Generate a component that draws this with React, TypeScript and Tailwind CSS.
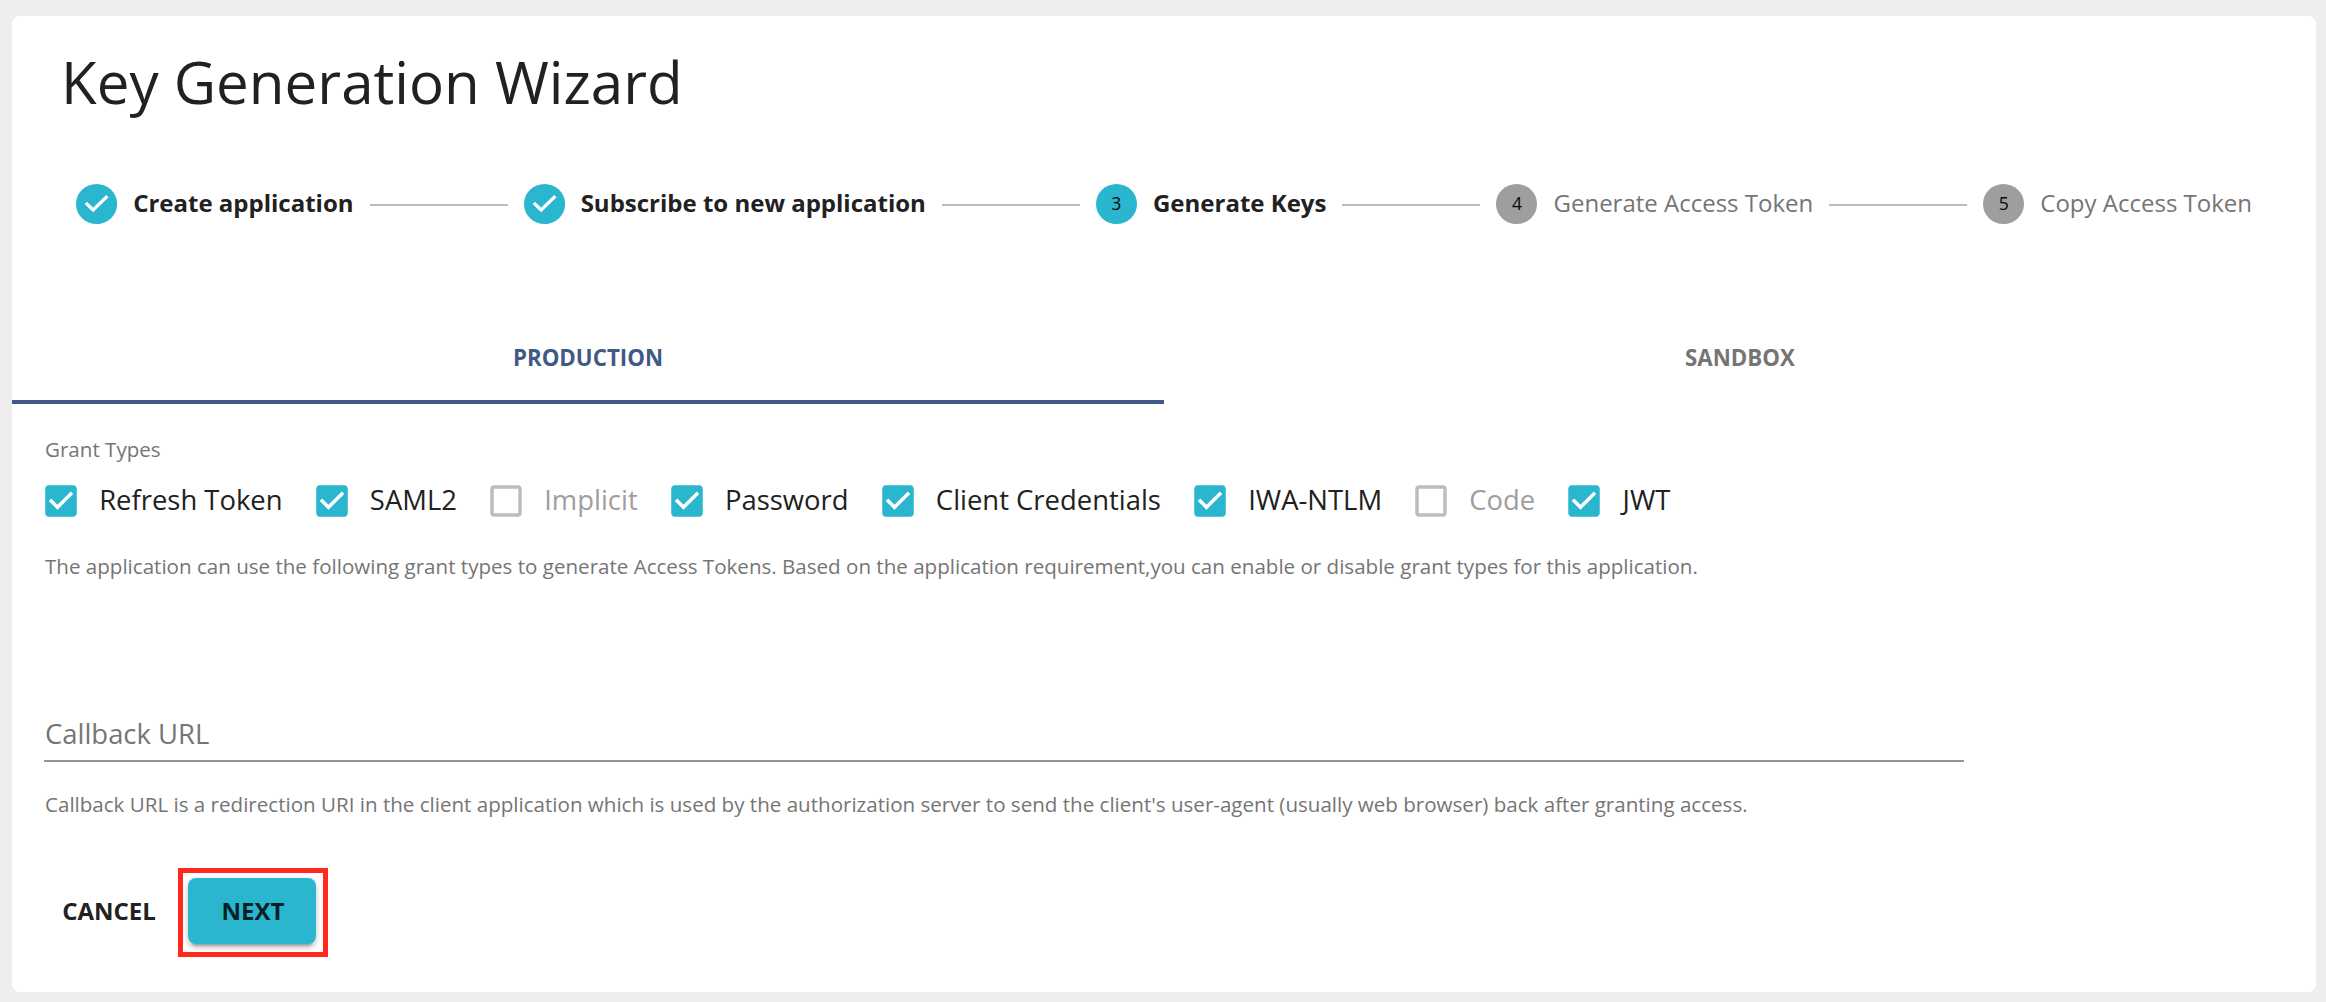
type StepState = "done" | "active" | "pending";

const steps: { label: string; state: StepState }[] = [
  { label: "Create application", state: "done" },
  { label: "Subscribe to new application", state: "done" },
  { label: "Generate Keys", state: "active" },
  { label: "Generate Access Token", state: "pending" },
  { label: "Copy Access Token", state: "pending" },
];

const grantTypes = [
  { label: "Refresh Token", checked: true },
  { label: "SAML2", checked: true },
  { label: "Implicit", checked: false },
  { label: "Password", checked: true },
  { label: "Client Credentials", checked: true },
  { label: "IWA-NTLM", checked: true },
  { label: "Code", checked: false },
  { label: "JWT", checked: true },
];

function StepIcon({ state, index }: { state: StepState; index: number }) {
  if (state === "done") {
    return (
      <svg viewBox="0 0 24 24" preserveAspectRatio="none" className="h-10 w-[41.14px] shrink-0 fill-[#29b6ce]">
        <path d="M12 0a12 12 0 1 0 0 24 12 12 0 0 0 0-24zm-2 17l-5-5 1.4-1.4 3.6 3.6 7.6-7.6L19 8l-9 9z" />
      </svg>
    );
  }
  return (
    <span
      className={`flex h-10 w-[41.14px] shrink-0 items-center justify-center rounded-[50%] text-[17.63px] leading-none text-[#0a0a0a] ${
        state === "active" ? "bg-[#29b6ce]" : "bg-[#9e9e9e]"
      }`}
    >
      {index}
    </span>
  );
}

function Stepper() {
  return (
    <ol className="mt-[62px] flex h-10 items-center gap-4 px-16">
      {steps.map((step, i) => (
        <li key={step.label} className={`flex items-center gap-4 ${i > 0 ? "flex-auto" : ""}`}>
          {i > 0 && <span className="mt-0.5 h-0.5 flex-1 bg-[#bdbdbd]" />}
          <StepIcon state={step.state} index={i + 1} />
          <span
            className={`pb-[3px] text-2xl whitespace-nowrap ${
              step.state === "pending" ? "text-[#757575]" : "font-bold text-[#212121]"
            }`}
          >
            {step.label}
          </span>
        </li>
      ))}
    </ol>
  );
}

function Checkbox({ label, checked }: { label: string; checked: boolean }) {
  return (
    <label className="flex items-center gap-[17.2px]">
      <svg
        viewBox="0 0 24 24"
        className={`size-[42px] shrink-0 ${checked ? "fill-[#29b6ce]" : "fill-[#bdbdbd]"}`}
      >
        {checked ? (
          <path d="M19 3H5c-1.11 0-2 .9-2 2v14c0 1.1.89 2 2 2h14c1.11 0 2-.9 2-2V5c0-1.1-.89-2-2-2zm-9 14l-5-5 1.41-1.41L10 14.17l7.59-7.59L19 8l-9 9z" />
        ) : (
          <path d="M19 5v14H5V5h14m0-2H5c-1.1 0-2 .9-2 2v14c0 1.1.9 2 2 2h14c1.1 0 2-.9 2-2V5c0-1.1-.9-2-2-2z" />
        )}
      </svg>
      <span
        className={`pb-[3px] text-[27.43px] leading-9 whitespace-nowrap ${
          checked ? "text-[#212121]" : "text-[#9e9e9e]"
        }`}
      >
        {label}
      </span>
    </label>
  );
}

export default function App() {
  return (
    <div className="h-[1002px] bg-[#eeeeee] pt-4 pr-2.5 pl-3 font-['Open_Sans',sans-serif]">
      <main className="flex h-[976px] flex-col rounded-lg bg-white pt-[26px]">
        <h1 className="px-[49px] text-[58.29px] leading-[80px] text-[#212121]">Key Generation Wizard</h1>

        <Stepper />

        <div role="tablist" className="mt-[86px] grid h-[94px] grid-cols-2 text-[22.29px] font-bold">
          <button
            role="tab"
            className="relative pt-0.5 text-[#415a85] after:absolute after:inset-x-0 after:bottom-0 after:h-1 after:bg-[#415a85]"
          >
            PRODUCTION
          </button>
          <button role="tab" className="pt-0.5 text-[#757575]">
            SANDBOX
          </button>
        </div>

        <section className="mt-[33px] ml-8 w-[1920px] text-[20.57px] leading-6 text-[#757575]">
          <h2 className="pl-px">Grant Types</h2>
          <div className="-ml-1 mt-5 flex h-10 items-center gap-[28.1px]">
            {grantTypes.map((grant) => (
              <Checkbox key={grant.label} {...grant} />
            ))}
          </div>
          <p className="mt-[33px] pl-px whitespace-nowrap">
            The application can use the following grant types to generate Access Tokens. Based on the application
            requirement,you can enable or disable grant types for this application.
          </p>
          <div className="mt-[140px] border-b-2 border-[#949494] pb-2.5 pl-px text-[27.43px] leading-8">
            Callback URL
          </div>
          <p className="mt-[30px] pl-px whitespace-nowrap">
            Callback URL is a redirection URI in the client application which is used by the authorization server to
            send the client's user-agent (usually web browser) back after granting access.
          </p>
        </section>

        <div className="mt-[62px] flex h-[66px] items-stretch pl-[50px] text-2xl font-bold text-[#212121]">
          <button className="mr-8 w-[94px]">CANCEL</button>
          <button className="relative w-32 rounded-lg bg-[#29b6ce] pl-0.5 text-[#081f23] shadow-[0_6px_2px_-4px_rgba(0,0,0,0.2),0_4px_4px_rgba(0,0,0,0.14),0_2px_10px_rgba(0,0,0,0.12)]">
            NEXT
            <span className="absolute -top-2.5 -right-3 -bottom-[13px] -left-2.5 border-5 border-[#ff2a1c]" />
          </button>
        </div>
      </main>
    </div>
  );
}
